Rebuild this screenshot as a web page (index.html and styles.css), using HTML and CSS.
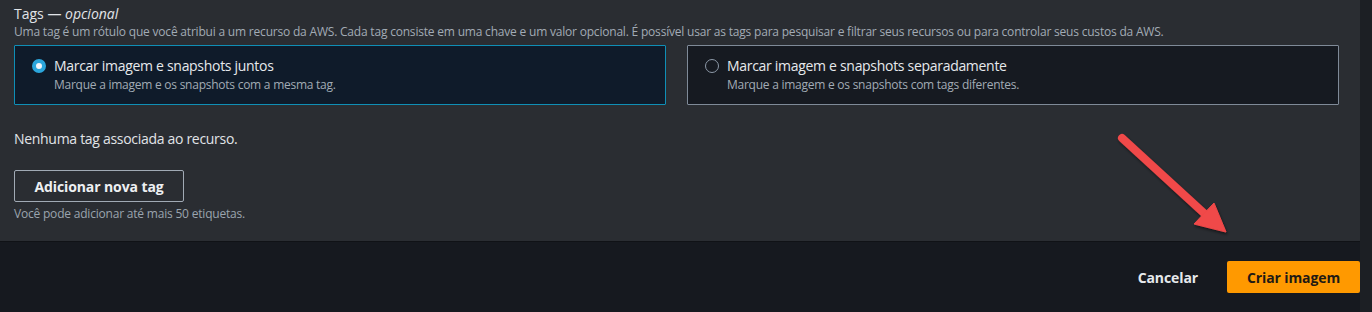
FILE: index.html
```html
<!DOCTYPE html>
<html lang="pt-BR">
<head>
<meta charset="utf-8">
<title>Tags</title>
<link rel="stylesheet" href="styles.css">
</head>
<body>
<div class="app">
  <div class="main">
    <section class="panel">
      <div class="title">Tags — <i>opcional</i></div>
      <div class="desc">Uma tag é um rótulo que você atribui a um recurso da AWS. Cada tag consiste em uma chave e um valor opcional. É possível usar as tags para pesquisar e filtrar seus recursos ou para controlar seus custos da AWS.</div>
      <div class="cards">
        <div class="card selected">
          <span class="radio on"></span>
          <div class="card-text">
            <div class="card-label">Marcar imagem e snapshots juntos</div>
            <div class="card-desc">Marque a imagem e os snapshots com a mesma tag.</div>
          </div>
        </div>
        <div class="card">
          <span class="radio"></span>
          <div class="card-text">
            <div class="card-label">Marcar imagem e snapshots separadamente</div>
            <div class="card-desc">Marque a imagem e os snapshots com tags diferentes.</div>
          </div>
        </div>
      </div>
      <div class="empty">Nenhuma tag associada ao recurso.</div>
      <button class="btn-normal">Adicionar nova tag</button>
      <div class="hint">Você pode adicionar até mais 50 etiquetas.</div>
    </section>
    <footer class="footer">
      <button class="btn-link">Cancelar</button>
      <button class="btn-primary">Criar imagem</button>
    </footer>
  </div>
  <div class="strip"></div>
</div>
<svg class="arrow" width="130" height="115" viewBox="0 0 130 115">
  <defs>
    <filter id="sh" x="-20%" y="-20%" width="140%" height="140%">
      <feDropShadow dx="1" dy="2" stdDeviation="1.5" flood-color="#000" flood-opacity="0.5"/>
    </filter>
  </defs>
  <g filter="url(#sh)" fill="#f04848" stroke="#f04848">
    <line x1="12" y1="13" x2="96" y2="90" stroke-width="8" stroke-linecap="round"/>
    <polygon points="116,107 84,99 104,78" stroke-width="1" stroke-linejoin="round"/>
  </g>
</svg>
</body>
</html>
```
FILE: styles.css
```css
* { box-sizing: border-box; }
html, body { margin: 0; padding: 0; }
body {
  background: #16191f;
  font-family: "Open Sans", "Noto Sans", sans-serif;
  color: #dadde1;
  width: 1372px;
  height: 312px;
  overflow: hidden;
  position: relative;
}
.app {
  display: grid;
  grid-template-columns: 1fr 12px;
  height: 312px;
}
.strip { background: #1c1f24; }
.main { display: flex; flex-direction: column; }
.panel {
  background: #2a2d32;
  height: 242px;
  padding: 4px 21px 0 14px;
  border-bottom: 1px solid #101216;
}
.title { font-size: 14px; line-height: 20px; color: #e1e4e8; }
.title i { font-style: italic; }
.desc {
  font-size: 12px; line-height: 16px; color: #a2abb5;
  letter-spacing: -0.2px; white-space: nowrap;
}
.cards {
  display: grid;
  grid-template-columns: 1fr 1fr;
  gap: 21px;
  margin-top: 5px;
}
.card {
  display: flex;
  align-items: flex-start;
  gap: 8px;
  height: 60px;
  padding: 10px 16px 0 17px;
  background: #161a21;
  border: 1px solid #7f8a98;
  border-radius: 1px;
}
.card.selected { background: #0f1b2a; border-color: #0f8fb6; }
.radio {
  flex: none;
  width: 14px; height: 14px;
  margin-top: 3px;
  border-radius: 50%;
  border: 1.5px solid #8d99a8;
}
.radio.on {
  border: 4px solid #2ba6dc;
  background: #f2f6fa;
}
.card-label { font-size: 14px; line-height: 20px; color: #e6e9ec; letter-spacing: -0.3px; }
.card-desc { font-size: 12px; line-height: 18px; color: #a2abb5; letter-spacing: -0.25px; }
.empty {
  margin-top: 24px;
  font-size: 14px; line-height: 20px; color: #e1e4e8; letter-spacing: -0.3px;
}
.btn-normal {
  display: block;
  margin-top: 21px;
  width: 170px; height: 32px;
  background: transparent;
  border: 1px solid #a1aab5;
  border-radius: 2px;
  color: #eef0f2;
  font-family: inherit;
  font-weight: 700;
  font-size: 14px;
  letter-spacing: -0.1px;
}
.hint {
  margin-top: 4px;
  font-size: 12px; line-height: 16px; color: #9aa4ae; letter-spacing: -0.2px;
}
.footer {
  flex: 1;
  display: flex;
  justify-content: flex-end;
  align-items: flex-start;
  padding-top: 19px;
  gap: 9px;
}
.btn-link {
  background: transparent;
  border: none;
  height: 32px;
  padding: 0 20px;
  color: #e6e9ec;
  font-family: inherit;
  font-weight: 700;
  font-size: 14px;
  letter-spacing: -0.1px;
}
.btn-primary {
  width: 133px; height: 32px;
  background: #ff9900;
  border: none;
  border-radius: 2px;
  color: #1f1a14;
  font-family: inherit;
  font-weight: 700;
  font-size: 14px;
  letter-spacing: -0.1px;
}
.arrow {
  position: absolute;
  left: 1110px;
  top: 125px;
}
```
